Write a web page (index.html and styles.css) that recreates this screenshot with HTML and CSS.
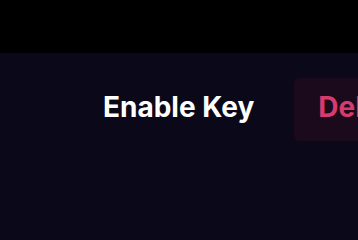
FILE: index.html
```html
<!DOCTYPE html>
<html>
<head>
<meta charset="utf-8">
<link rel="stylesheet" href="styles.css">
</head>
<body>
<div class="topbar"></div>
<main class="content">
  <div class="actions">
    <button class="btn btn-ghost">Enable Key</button>
    <button class="btn btn-danger">Delete Key</button>
  </div>
</main>
</body>
</html>
```
FILE: styles.css
```css
html, body {
  margin: 0;
  padding: 0;
  width: 358px;
  height: 212px;
  overflow: hidden;
  background: #0a0819;
}
.topbar {
  height: 53px;
  background: #000000;
}
.content {
  padding: 25px 0 0 0;
  overflow: hidden;
}
.actions {
  display: flex;
  gap: 16px;
  padding-left: 79px;
  white-space: nowrap;
}
.btn {
  font-family: Inter, "Noto Sans", sans-serif;
  font-weight: 700;
  font-size: 28px;
  line-height: 42px;
  padding: 8px 24px 13px;
  border: 0;
  border-radius: 5px;
  cursor: pointer;
  flex: none;
}
.btn-ghost {
  background: transparent;
  color: #ffffff;
}
.btn-danger {
  background: #1a0a1c;
  color: #d63a6e;
}
```
